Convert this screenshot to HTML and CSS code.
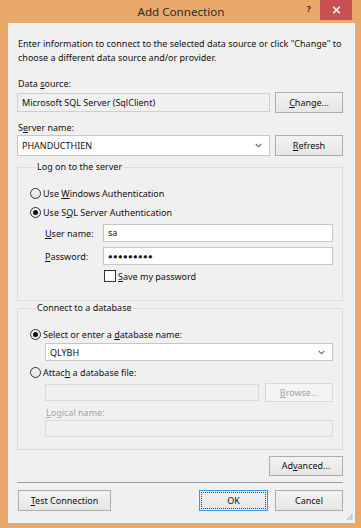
FILE: index.html
```html
<!DOCTYPE html>
<html>
<head>
<meta charset="utf-8">
<title>Add Connection</title>
<link rel="stylesheet" href="styles.css">
</head>
<body>
<div class="window">
  <div class="titlebar">
    <div class="title">Add Connection</div>
    <div class="controls">
      <span class="help">?</span>
      <span class="close"><svg width="9" height="8" viewBox="0 0 9 8"><path d="M1.2 0.8 L7.8 7.2 M7.8 0.8 L1.2 7.2" stroke="#fff" stroke-width="1.6" fill="none"/></svg></span>
    </div>
  </div>
  <div class="client">
    <p class="intro">Enter information to connect to the selected data source or click "Change" to<br>choose a different data source and/or provider.</p>

    <div class="lbl lbl-ds">Data <u>s</u>ource:</div>
    <div class="row row-ds">
      <div class="field readonly grow">Microsoft SQL Server (SqlClient)</div>
      <button class="btn side"><u>C</u>hange...</button>
    </div>

    <div class="lbl lbl-sn">S<u>e</u>rver name:</div>
    <div class="row row-sn">
      <div class="field combo grow"><span>PHANDUCTHIEN</span><svg class="chev" width="7" height="5" viewBox="0 0 7 5"><path d="M0.8 1 L3.5 3.8 L6.2 1" stroke="#666" stroke-width="1.1" fill="none"/></svg></div>
      <button class="btn side"><u>R</u>efresh</button>
    </div>

    <fieldset class="group group-logon">
      <legend>Log on to the server</legend>
      <div class="opt opt-first"><span class="radio"></span><span>Use <u>W</u>indows Authentication</span></div>
      <div class="opt"><span class="radio checked"></span><span>Use S<u>Q</u>L Server Authentication</span></div>
      <div class="cred cred-user"><span class="cred-lbl"><u>U</u>ser name:</span><div class="field grow">sa</div></div>
      <div class="cred cred-pass"><span class="cred-lbl"><u>P</u>assword:</span><div class="field grow dots">●●●●●●●●●</div></div>
      <div class="save"><span class="check"></span><span><u>S</u>ave my password</span></div>
    </fieldset>

    <fieldset class="group group-db">
      <legend>Connect to a database</legend>
      <div class="opt opt-first"><span class="radio checked"></span><span>Select or enter a <u>d</u>atabase name:</span></div>
      <div class="indent">
        <div class="field combo db-combo"><span>QLYBH</span><svg class="chev" width="7" height="5" viewBox="0 0 7 5"><path d="M0.8 1 L3.5 3.8 L6.2 1" stroke="#666" stroke-width="1.1" fill="none"/></svg></div>
      </div>
      <div class="opt opt-attach"><span class="radio"></span><span>Attac<u>h</u> a database file:</span></div>
      <div class="indent attach-row">
        <div class="field disabled grow"></div>
        <button class="btn disabled-btn"><u>B</u>rowse...</button>
      </div>
      <div class="indent lbl-disabled"><u>L</u>ogical name:</div>
      <div class="indent">
        <div class="field disabled logical"></div>
      </div>
    </fieldset>

    <div class="adv-row"><button class="btn adv">Ad<u>v</u>anced...</button></div>
    <div class="sep"></div>
    <div class="footer">
      <button class="btn test"><u>T</u>est Connection</button>
      <div class="spacer"></div>
      <button class="btn ok">OK</button>
      <button class="btn cancel">Cancel</button>
    </div>
    <svg class="grip" width="7" height="7" viewBox="0 0 7 7"><g fill="#b5b5b5"><rect x="5" y="1" width="1.5" height="1.5"/><rect x="3" y="3" width="1.5" height="1.5"/><rect x="5" y="3" width="1.5" height="1.5"/><rect x="1" y="5" width="1.5" height="1.5"/><rect x="3" y="5" width="1.5" height="1.5"/><rect x="5" y="5" width="1.5" height="1.5"/></g></svg>
  </div>
</div>
</body>
</html>
```
FILE: styles.css
```css
* { box-sizing: border-box; }
html, body { margin: 0; padding: 0; }
body {
  background: #eaa86b;
  font-family: "Noto Sans", "Open Sans", sans-serif;
  font-size: 9px;
  color: #111;
}
.window {
  width: 361px;
  height: 528px;
  background: #eaa86b;
  display: flex;
  flex-direction: column;
  padding: 0 6px 5px 8px;
}
.titlebar {
  height: 23px;
  display: grid;
  margin: 0 -6px 0 -8px;
}
.title, .controls { grid-area: 1 / 1; }
.title {
  text-align: center;
  font-size: 11.6px;
  line-height: 24px;
  color: #2b2b2b;
  padding-left: 1px;
}
.controls {
  justify-self: end;
  display: flex;
  align-items: flex-start;
  margin-right: 9px;
}
.help {
  font-weight: bold;
  font-size: 9.5px;
  line-height: 18px;
  color: #333;
  margin-right: 9px;
}
.close {
  width: 32px;
  height: 20px;
  background: #c75050;
  display: flex;
  align-items: center;
  justify-content: center;
}
.client {
  flex: 1;
  background: #f0f0f0;
  padding: 14px 12px 0 9px;
  display: flex;
  flex-direction: column;
  position: relative;
}
.intro {
  margin: 0 0 0 1px;
  line-height: 14px;
  white-space: nowrap;
}
.lbl { line-height: 14px; margin-left: 1px; }
.lbl-ds { margin-top: 12px; }
.lbl-sn { margin-top: 8px; }
.row { display: flex; align-items: center; gap: 5px; }
.row-ds { margin-top: 1px; height: 21px; }
.row-sn { margin-top: 0; height: 21px; }
.grow { flex: 1; }
.field {
  height: 19px;
  border: 1px solid #c6c6c6;
  background: #fff;
  padding: 0 4px;
  line-height: 17px;
  white-space: nowrap;
  overflow: hidden;
}
.field.readonly { background: #f0f0f0; border-color: #cfcfcf; height: 19px; }
.combo { display: flex; align-items: center; justify-content: space-between; height: 21px; }
.combo .chev { margin-right: 3px; }
.btn {
  font: inherit;
  color: #111;
  height: 21px;
  border: 1px solid #acacac;
  background: linear-gradient(#f2f2f2, #e6e6e6);
  padding: 0;
  line-height: 19px;
  text-align: center;
}
.btn.side { width: 68px; }
.group {
  margin: 4px 0 0 0;
  padding: 0 9px 0 12px;
  border: 1px solid #dcdcdc;
  min-width: 0;
}
.group legend {
  padding: 0 1px;
  margin-left: 6px;
  line-height: 14px;
}
.group-logon { padding-bottom: 17px; }
.group-db { margin-top: 0; padding-bottom: 12px; }
.opt {
  display: flex;
  align-items: center;
  height: 16px;
  gap: 2px;
  margin-top: 3px;
  white-space: nowrap;
}
.opt-first { margin-top: 11px; }
.radio {
  width: 11px;
  height: 11px;
  border: 1px solid #333;
  border-radius: 50%;
  background: linear-gradient(#f7f7f7, #e4e4e4);
  display: inline-flex;
  align-items: center;
  justify-content: center;
  flex: none;
}
.radio.checked::after {
  content: "";
  width: 5px;
  height: 5px;
  border-radius: 50%;
  background: #111;
}
.cred {
  display: flex;
  align-items: center;
  margin-left: 15px;
  height: 18px;
  white-space: nowrap;
}
.cred-user { margin-top: 4px; }
.cred-pass { margin-top: 5px; }
.cred-lbl { width: 58px; flex: none; }
.cred .field { height: 18px; line-height: 16px; }
.dots { font-size: 7.6px; letter-spacing: 0.4px; color: #111; }
.save {
  display: flex;
  align-items: center;
  height: 14px;
  margin: 4px 0 0 74px;
  gap: 2px;
  white-space: nowrap;
}
.check {
  width: 12px;
  height: 12px;
  border: 1px solid #333;
  background: #fff;
  flex: none;
}
.indent { margin-left: 15px; }
.db-combo { height: 18px; margin-top: 1px; }
.opt-attach { margin-top: 3px; }
.attach-row { display: flex; align-items: center; gap: 6px; margin-top: 3px; height: 19px; }
.field.disabled { background: #f0f0f0; border-color: #dadada; height: 17px; }
.disabled-btn {
  width: 68px;
  height: 19px;
  line-height: 17px;
  color: #a3a3a3;
  border-color: #d9d9d9;
  background: #f4f4f4;
}
.lbl-disabled { color: #a3a3a3; line-height: 14px; margin-top: 4px; margin-left: 16px; }
.logical { height: 18px; }
.adv-row { display: flex; justify-content: flex-end; margin-top: 6px; }
.btn.adv { width: 74px; height: 20px; line-height: 18px; }
.sep { height: 1px; background: #a0a0a0; margin-top: 6px; }
.footer { display: flex; align-items: center; margin-top: 7px; margin-left: 1px; }
.spacer { flex: 1; }
.btn.test { width: 93px; }
.btn.ok {
  width: 69px;
  border-color: #3399ff;
  outline: 1px dotted #444;
  outline-offset: -3px;
  margin-right: 7px;
}
.btn.cancel { width: 68px; }
.grip { position: absolute; right: 2px; bottom: 3px; }
u { text-decoration: underline; text-underline-offset: 1px; }
```
